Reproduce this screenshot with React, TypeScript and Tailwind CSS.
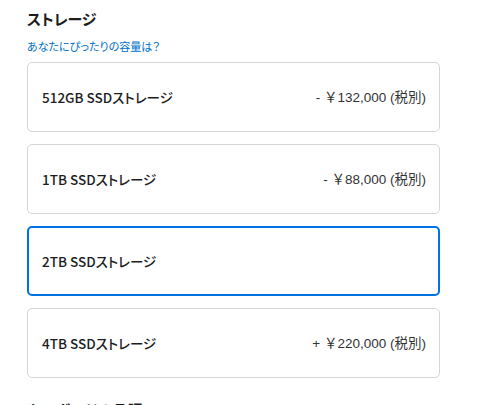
const options = [
  { id: '512', label: '512GB SSDストレージ', sign: '-', price: '132,000' },
  { id: '1tb', label: '1TB SSDストレージ', sign: '-', price: '88,000' },
  { id: '2tb', label: '2TB SSDストレージ', sign: '', price: '' },
  { id: '4tb', label: '4TB SSDストレージ', sign: '+', price: '220,000' },
]

export default function App() {
  const selected = '2tb'

  return (
    <div
      className="w-[500px] h-[405px] overflow-hidden bg-white text-[#1d1d1f] pl-[27px] pt-[10px] [font-feature-settings:'palt']"
      style={{ fontFamily: '"Liberation Sans", "Noto Sans CJK JP", sans-serif' }}
    >
      {/* ストレージ */}
      <h2 className="text-[15px] font-bold leading-[20px]">ストレージ</h2>
      <a href="#" className="block mt-[10px] text-[11px] leading-[14px] text-[#0070c9]">
        あなたにぴったりの容量は？
      </a>

      <div className="mt-[8px] w-[413px] flex flex-col gap-[12px]">
        {options.map((o) => (
          <div
            key={o.id}
            className={
              o.id === selected
                ? 'h-[70px] rounded-[5px] border-2 border-[#0071e3] flex items-center justify-between pl-[13px] pr-[12px]'
                : 'h-[70px] rounded-[5px] border border-[#d6d6d6] flex items-center justify-between pl-[14px] pr-[13px]'
            }
          >
            <span
              className="text-[13.5px] font-medium"
              style={{ fontFamily: '"Noto Sans CJK JP", sans-serif' }}
            >
              {o.label}
            </span>
            {o.price && (
              <span className="text-[13.5px] text-[#333]">
                {o.sign}{' '}
                <span
                  className="[font-feature-settings:normal]"
                  style={{ fontFamily: '"Noto Sans CJK JP", sans-serif' }}
                >
                  ￥
                </span>
                {o.price} (税別)
              </span>
            )}
          </div>
        ))}
      </div>

      <h2 className="mt-[23px] text-[15px] font-bold leading-[20px]">キーボードの言語</h2>
    </div>
  )
}
